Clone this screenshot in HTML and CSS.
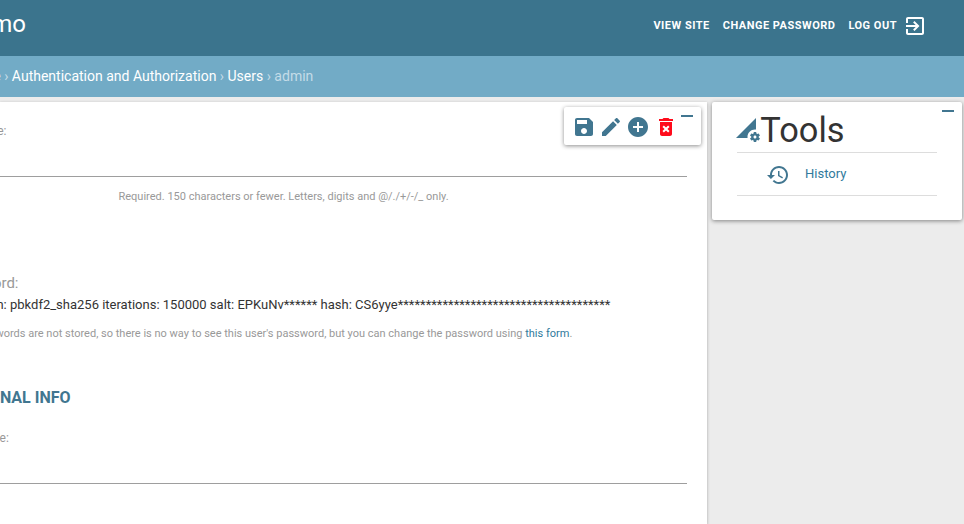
FILE: index.html
```html
<!DOCTYPE html>
<html lang="en">
<head>
<meta charset="utf-8">
<title>admin | Change user</title>
<link rel="stylesheet" href="styles.css">
</head>
<body>
<header class="header">
  <div class="clip brand">Demo</div>
  <nav class="user-tools">
    <a>View site</a><a>Change password</a><a>Log out</a>
    <svg class="icon" viewBox="0 0 24 24"><path d="M10.09 15.59L11.5 17l5-5-5-5-1.41 1.41L12.67 11H3v2h9.67l-2.58 2.59zM19 3H5c-1.11 0-2 .9-2 2v4h2V5h14v14H5v-4H3v4c0 1.1.89 2 2 2h14c1.1 0 2-.9 2-2V5c0-1.1-.9-2-2-2z"/></svg>
  </nav>
</header>
<div class="breadcrumbs"><div class="clip trail"><span><a>Home</a> › <a>Authentication and Authorization</a> › <a>Users</a> › admin</span></div></div>
<div class="layout">
  <main class="content">
    <div class="actions">
      <svg class="icon" viewBox="0 0 24 24"><path d="M17 3H5c-1.11 0-2 .9-2 2v14c0 1.1.89 2 2 2h14c1.1 0 2-.9 2-2V7l-4-4zm-5 16c-1.66 0-3-1.34-3-3s1.34-3 3-3 3 1.34 3 3-1.34 3-3 3zm3-10H5V5h10v4z"/></svg>
      <svg class="icon" viewBox="0 0 24 24"><path d="M3 17.25V21h3.75L17.81 9.94l-3.75-3.75L3 17.25zM20.71 7.04c.39-.39.39-1.02 0-1.41l-2.34-2.34c-.39-.39-1.02-.39-1.41 0l-1.83 1.83 3.75 3.75 1.83-1.83z"/></svg>
      <svg class="icon" viewBox="0 0 24 24"><path d="M12 2C6.48 2 2 6.48 2 12s4.48 10 10 10 10-4.48 10-10S17.52 2 12 2zm5 11h-4v4h-2v-4H7v-2h4V7h2v4h4v2z"/></svg>
      <svg class="icon delete" viewBox="0 0 24 24"><path d="M6 19c0 1.1.9 2 2 2h8c1.1 0 2-.9 2-2V7H6v12zm2.46-7.12l1.41-1.41L12 12.59l2.12-2.12 1.41 1.41L13.41 14l2.12 2.12-1.41 1.41L12 15.41l-2.12 2.12-1.41-1.41L10.59 14l-2.13-2.12zM15.5 4l-1-1h-5l-1 1H5v2h14V4z"/></svg>
      <span class="minimize"></span>
    </div>
    <div class="clip label label-username">Username:</div>
    <div class="input-line"></div>
    <p class="help help-username">Required. 150 characters or fewer. Letters, digits and @/./+/-/_ only.</p>
    <div class="clip label label-password">Password:</div>
    <div class="clip hash">algorithm: pbkdf2_sha256 iterations: 150000 salt: EPKuNv****** hash: CS6yye**************************************</div>
    <div class="clip help help-password"><span>Raw passwords are not stored, so there is no way to see this user's password, but you can change the password using <a>this form</a>.</span></div>
    <h2 class="clip section">Personal info</h2>
    <div class="clip label label-first">First name:</div>
    <div class="input-line line-first"></div>
  </main>
  <aside class="tools">
    <span class="minimize"></span>
    <h1><svg class="icon" viewBox="0 0 24 24"><path d="M18.99 11.5c.34 0 .67.03 1 .07L20 0 0 20h11.56c-.04-.33-.07-.66-.07-1 0-4.14 3.36-7.5 7.5-7.5zm3.71 7.99c.02-.16.04-.32.04-.49 0-.17-.01-.33-.04-.49l1.06-.83c.09-.08.12-.21.06-.32l-1-1.73c-.06-.11-.19-.15-.31-.11l-1.24.5c-.26-.2-.54-.37-.85-.49l-.19-1.32c-.01-.12-.12-.21-.24-.21h-2c-.12 0-.23.09-.25.21l-.19 1.32c-.3.13-.59.29-.85.49l-1.24-.5c-.11-.04-.24 0-.31.11l-1 1.73c-.06.11-.04.24.06.32l1.06.83c-.02.16-.03.32-.03.49 0 .17.01.33.03.49l-1.06.83c-.09.08-.12.21-.06.32l1 1.73c.06.11.19.15.31.11l1.24-.5c.26.2.54.37.85.49l.19 1.32c.02.12.12.21.25.21h2c.12 0 .23-.09.25-.21l.19-1.32c.3-.13.59-.29.84-.49l1.25.5c.11.04.24 0 .31-.11l1-1.73c.06-.11.03-.24-.06-.32l-1.07-.83zm-3.71 1.01c-.83 0-1.5-.67-1.5-1.5s.67-1.5 1.5-1.5 1.5.67 1.5 1.5-.67 1.5-1.5 1.5z"/></svg><span>Tools</span></h1>
    <div class="tool">
      <svg class="icon" viewBox="0 0 24 24"><path d="M13 3c-4.97 0-9 4.03-9 9H1l3.89 3.89.07.14L9 12H6c0-3.87 3.13-7 7-7s7 3.13 7 7-3.13 7-7 7c-1.93 0-3.68-.79-4.94-2.06l-1.42 1.42C8.27 19.99 10.51 21 13 21c4.97 0 9-4.03 9-9s-4.03-9-9-9zm-1 5v5l4.28 2.54.72-1.21-3.5-2.08V8H12z"/></svg>
      <a>History</a>
    </div>
  </aside>
</div>
</body>
</html>
```
FILE: styles.css
```css
* { box-sizing: border-box; }
body {
  margin: 0;
  height: 524px;
  overflow: hidden;
  background: #ececec;
  color: #333;
  font-family: Roboto, "Liberation Sans", sans-serif;
  font-size: 13px;
}
h1, h2, p { margin: 0; }
.icon { display: block; flex: none; width: 24px; height: 24px; fill: #417690; }
/* Lines whose start runs off the left edge of the viewport */
.clip { display: flex; justify-content: flex-end; white-space: nowrap; }
.header {
  display: flex;
  justify-content: space-between;
  height: 56px;
  padding-right: 37px;
  background: #3b748d;
  color: #fff;
}
.brand { width: 26px; font-size: 24px; line-height: 48px; font-weight: 400; }
.user-tools {
  display: flex;
  align-items: center;
  height: 52px;
  font-size: 11px;
  font-weight: 700;
  letter-spacing: .5px;
  text-transform: uppercase;
}
.user-tools a { margin-right: 13px; padding-bottom: 2px; }
.user-tools a:nth-of-type(3) { margin-right: 6px; }
.user-tools .icon { fill: #fff; }
.breadcrumbs { height: 41px; background: #72abc6; color: #c4dce8; font-size: 14px; line-height: 41px; }
.breadcrumbs a { color: #fff; }
.trail { width: 313.3px; }
.layout { display: flex; align-items: flex-start; gap: 5px; padding-top: 5px; }
.content {
  position: relative;
  width: 707px;
  height: 422px;
  background: #fff;
  box-shadow: 0 1px 3px rgba(0,0,0,.3);
}
.actions {
  position: absolute;
  top: 5px;
  left: 564px;
  display: flex;
  gap: 3.4px;
  width: 137px;
  height: 38px;
  padding: 8px 0 0 7.7px;
  border-radius: 2px;
  background: #fff;
  box-shadow: 0 1px 4px rgba(0,0,0,.45);
}
.delete { fill: #ff0b1b; }
.minimize { position: absolute; top: 8px; right: 8px; width: 12px; height: 2px; background: #417690; }
.label { color: #999; line-height: 20px; }
.label-username { width: 6.5px; padding-top: 19px; font-size: 12px; }
.input-line { width: 687px; height: 1px; margin-top: 35px; background: #9e9e9e; }
.help { color: #999; font-size: 11px; line-height: 16px; }
.help-username { margin: 12px 0 0 118.5px; }
.label-password { width: 18.5px; margin-top: 68px; font-size: 15px; }
.hash { width: 610.4px; margin-top: 2px; line-height: 20px; }
.help-password { width: 572.3px; margin-top: 11px; }
.help a { color: #317a9c; }
.section {
  width: 70.5px;
  margin-top: 46px;
  color: #417690;
  font-size: 16px;
  line-height: 20px;
  text-transform: uppercase;
}
.label-first { width: 8.8px; margin-top: 20px; font-size: 12px; }
.tools {
  position: relative;
  width: 250px;
  height: 118px;
  padding: 6px 24px 0;
  border-radius: 2px;
  background: #fff;
  box-shadow: 0 1px 4px rgba(0,0,0,.45);
}
.tools h1 {
  display: flex;
  height: 45px;
  width: 200.5px;
  margin-left: .5px;
  border-bottom: 1px solid #ddd;
  font-size: 34.4px;
  font-weight: 400;
  line-height: 45px;
}
.tools h1 .icon { margin: 10px .3px 0 -.5px; }
.tool {
  display: flex;
  height: 43px;
  width: 200.5px;
  margin-left: .5px;
  padding: 10px 0 0 29.5px;
  border-bottom: 1px solid #ddd;
}
.tool a { margin-left: 15px; color: #317a9c; line-height: 22px; }
```
